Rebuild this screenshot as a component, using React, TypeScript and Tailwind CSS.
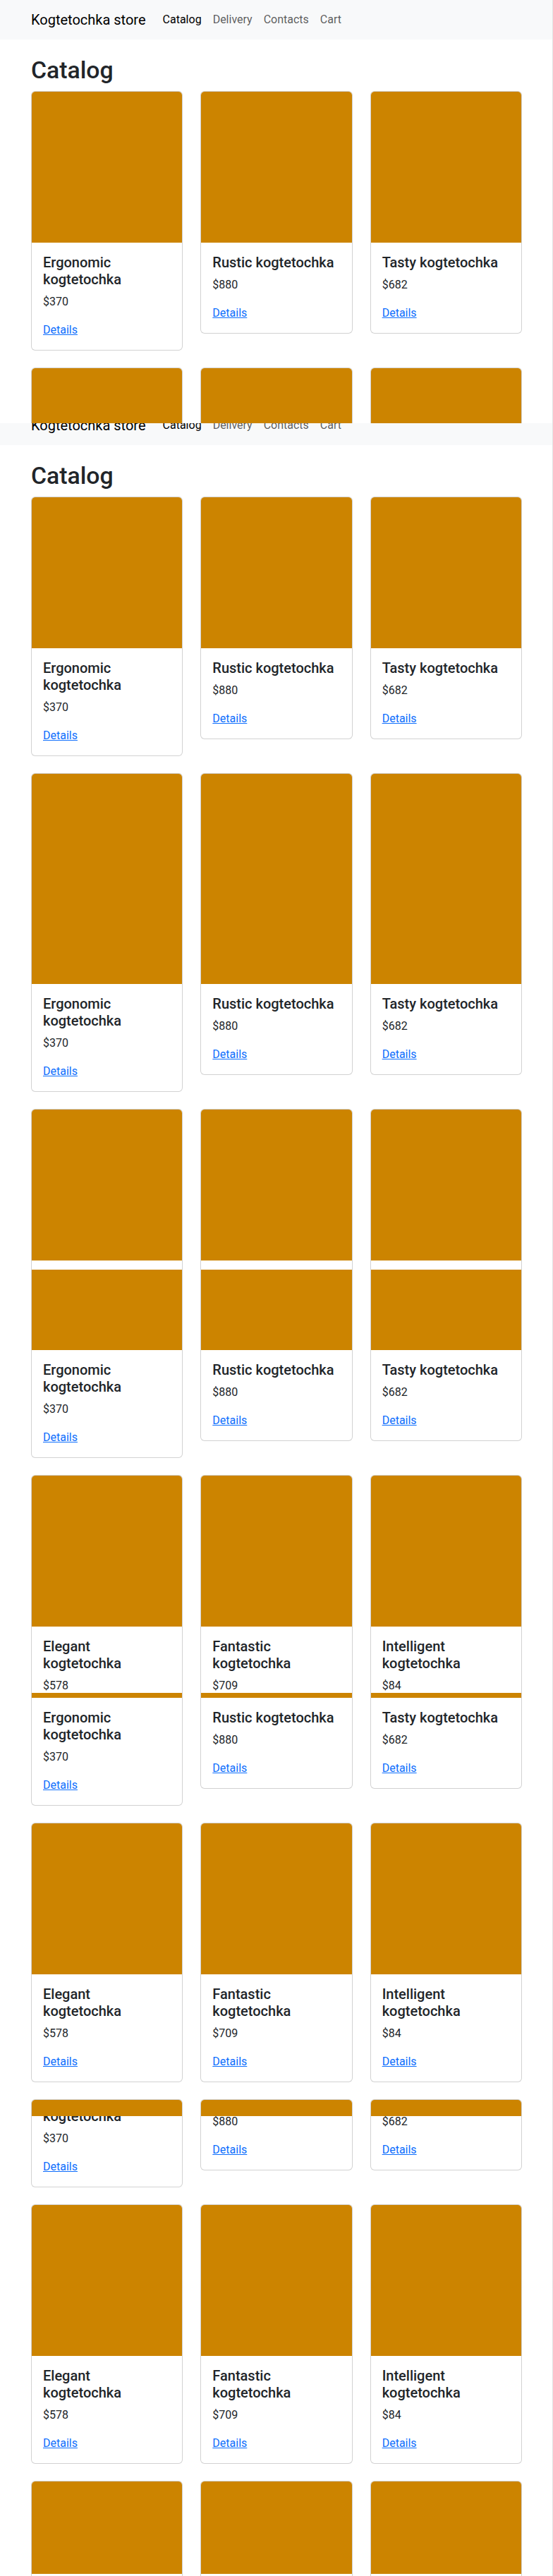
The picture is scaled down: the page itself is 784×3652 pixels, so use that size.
import type { ReactNode } from 'react';

interface Product {
    name: string;
    price: number;
}

const ergonomic: Product = { name: 'Ergonomic kogtetochka', price: 370 };
const rustic: Product = { name: 'Rustic kogtetochka', price: 880 };
const tasty: Product = { name: 'Tasty kogtetochka', price: 682 };
const elegant: Product = { name: 'Elegant kogtetochka', price: 578 };
const fantastic: Product = { name: 'Fantastic kogtetochka', price: 709 };
const intelligent: Product = { name: 'Intelligent kogtetochka', price: 84 };

const firstRow = [ergonomic, rustic, tasty];
const secondRow = [elegant, fantastic, intelligent];

const navLinks = ['Catalog', 'Delivery', 'Contacts', 'Cart'];

function Navbar() {
    return (
        <nav className="bg-[#f8f9fa] py-2">
            <div className="ml-[44px] flex items-center">
                <a href="#" className="mr-4 py-[5px] text-[20px] leading-[30px] text-black">
                    Kogtetochka store
                </a>
                <ul className="flex">
                    {navLinks.map((link, i) => (
                        <li key={link}>
                            <a
                                href="#"
                                className={
                                    i === 0
                                        ? 'block px-2 py-2 leading-6 text-black'
                                        : 'block px-2 py-2 leading-6 text-black/65'
                                }
                            >
                                {link}
                            </a>
                        </li>
                    ))}
                </ul>
            </div>
        </nav>
    );
}

function Photo({ h }: { h: string }) {
    return <div className={`${h} bg-[#cc8400]`} />;
}

function Card({ product, image }: { product: Product; image: ReactNode }) {
    return (
        <div className="flex flex-col overflow-hidden rounded-[6px] border border-[rgba(0,0,0,0.175)] bg-white">
            {image}
            <div className="p-4 leading-6">
                <h5 className="mb-2 max-w-[176px] text-[20px] font-medium leading-[24px]">{product.name}</h5>
                <p className="mb-4">${product.price}</p>
                <a href="#" className="text-[#0d6efd] underline">
                    Details
                </a>
            </div>
        </div>
    );
}

function Row({ products, image }: { products: Product[]; image: ReactNode }) {
    return (
        <div className="grid grid-cols-3 items-start gap-x-[25px]">
            {products.map((p) => (
                <Card key={p.name} product={p} image={image} />
            ))}
        </div>
    );
}

function Rows({ children }: { children: ReactNode }) {
    return <div className="ml-[44px] flex w-[696px] flex-col gap-6">{children}</div>;
}

function Header() {
    return (
        <>
            <Navbar />
            <div className="ml-[44px] pt-6">
                <h1 className="mb-2 text-[33.76px] font-medium leading-[40.5px]">Catalog</h1>
            </div>
        </>
    );
}

export default function App() {
    return (
        <div className="w-[784px] overflow-hidden border-r border-[#e3e3e3] bg-white font-['Roboto',sans-serif] text-[16px] text-[#212529]">
            {/* first capture */}
            <div className="h-[600px] overflow-hidden">
                <Header />
                <Rows>
                    <Row products={firstRow} image={<Photo h="h-[214px]" />} />
                    <Row products={firstRow} image={<Photo h="h-[214px]" />} />
                </Rows>
            </div>

            {/* second capture, scrolled a little */}
            <div className="h-[1187px] overflow-hidden">
                <div className="-mt-[25px]">
                    <Header />
                    <Rows>
                        <Row products={firstRow} image={<Photo h="h-[214px]" />} />
                        <Row products={firstRow} image={<Photo h="h-[298px]" />} />
                        <Row products={firstRow} image={<Photo h="h-[214px]" />} />
                    </Rows>
                </div>
            </div>

            {/* third capture */}
            <div className="h-[613px] overflow-hidden">
                <div className="-mt-[20px]">
                    <Rows>
                        <Row
                            products={firstRow}
                            image={
                                <>
                                    <div className="h-[32px] bg-white" />
                                    <Photo h="h-[114px]" />
                                </>
                            }
                        />
                        <Row products={secondRow} image={<Photo h="h-[214px]" />} />
                    </Rows>
                </div>
            </div>

            {/* fourth capture */}
            <div className="h-[600px] overflow-hidden">
                <div className="-mt-[20px]">
                    <Rows>
                        <Row products={firstRow} image={<Photo h="h-[26px]" />} />
                        <Row products={secondRow} image={<Photo h="h-[214px]" />} />
                        <Row products={firstRow} image={<Photo h="h-[214px]" />} />
                    </Rows>
                </div>
            </div>

            {/* last capture */}
            <div className="h-[652px] overflow-hidden">
                <div className="-mt-[153px]">
                    <Rows>
                        <Row products={firstRow} image={<Photo h="h-[100px]" />} />
                        <Row products={secondRow} image={<Photo h="h-[214px]" />} />
                        <Row products={firstRow} image={<Photo h="h-[131px]" />} />
                    </Rows>
                </div>
            </div>
        </div>
    );
}
